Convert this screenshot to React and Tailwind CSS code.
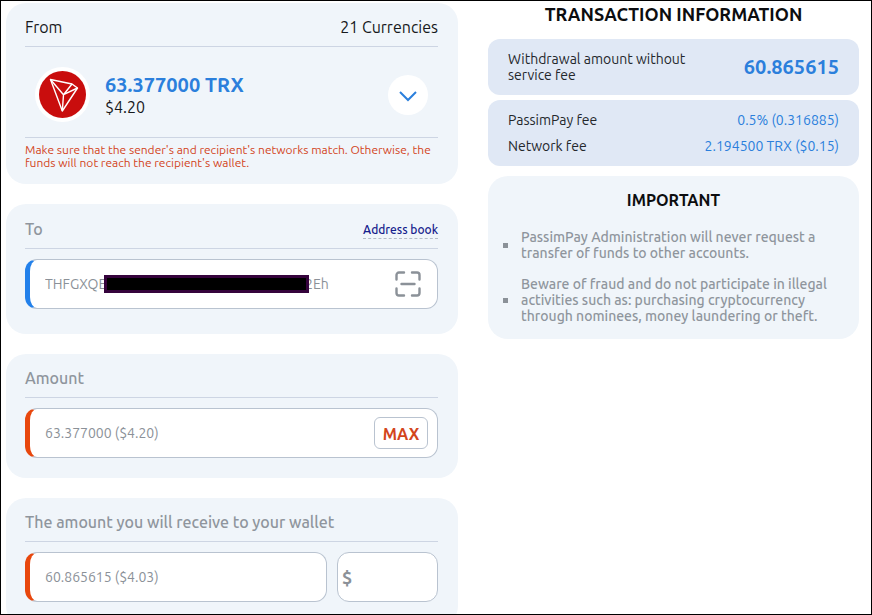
import { useState } from "react";

const NOTES = [
  "PassimPay Administration will never request a transfer of funds to other accounts.",
  "Beware of fraud and do not participate in illegal activities such as: purchasing cryptocurrency through nominees, money laundering or theft.",
];

function Card({ title, aside, htmlFor, className, children }) {
  return (
    <section className={`rounded-[20px] bg-[#f0f5fa] pr-5 pl-[19px] ${className}`}>
      <div className="flex items-center justify-between border-b border-[#cdd5e3] pt-3.5 pb-[9px] text-base leading-5">
        {htmlFor ? (
          <label htmlFor={htmlFor} className="font-medium text-[#8f959d]">
            {title}
          </label>
        ) : (
          <h2 className="text-[#17191c]">{title}</h2>
        )}
        {aside}
      </div>
      {children}
    </section>
  );
}

function TronLogo() {
  return (
    <span className="flex size-[55px] shrink-0 items-center justify-center rounded-full bg-white">
      <svg viewBox="0 0 47 47" className="size-[47px]" aria-hidden="true">
        <circle cx="23.5" cy="23.5" r="23.5" fill="#c90d0d" />
        <g fill="none" stroke="#fff" strokeWidth="1.4" strokeLinejoin="round">
          <path d="M11.5 8.5 33 13 38.5 17 23.3 40Z" />
          <path d="M11.5 8.5 24.5 23.7 23.3 40M24.5 23.7 38.5 17M24.5 23.7 33 13" />
        </g>
      </svg>
    </span>
  );
}

function ScanIcon() {
  return (
    <svg
      viewBox="0 0 26 26"
      className="size-[26px]"
      fill="none"
      stroke="#8b9198"
      strokeWidth="2.4"
      strokeLinecap="round"
      aria-hidden="true"
    >
      <path d="M1.5 8.5V4a2.5 2.5 0 0 1 2.5-2.5h5M17 1.5h5A2.5 2.5 0 0 1 24.5 4v4.5M24.5 17.5V22a2.5 2.5 0 0 1-2.5 2.5h-5M9 24.5H4A2.5 2.5 0 0 1 1.5 22v-4.5M6.5 13h13" />
    </svg>
  );
}

export default function App() {
  const [address, setAddress] = useState("THFGXQE");
  const [amount, setAmount] = useState("63.377000 ($4.20)");
  const [receive, setReceive] = useState("60.865615 ($4.03)");
  const [usd, setUsd] = useState("");

  return (
    <div className="h-screen overflow-hidden border border-black bg-white pt-0.5 pr-3 pl-[5px] font-['Ubuntu','Noto_Sans',sans-serif]">
      <div className="grid grid-cols-[452fr_371fr] items-start gap-[30px]">
        <main className="flex min-w-0 flex-col gap-5">
          <Card title="From" className="pb-[15px]" aside={<span className="text-[#17191c]">21 Currencies</span>}>
            <div className="flex items-center border-b border-[#cdd5e3] px-2.5 pt-5 pb-[15px]">
              <TronLogo />
              <div className="ml-[15px] flex-1 pt-[3px]">
                <p className="text-xl leading-[22px] font-semibold text-[#2b7fdc]">63.377000 TRX</p>
                <p className="text-base leading-[22px] text-[#17191c]">$4.20</p>
              </div>
              <button
                type="button"
                aria-label="Choose currency"
                className="flex size-10 items-center justify-center rounded-full bg-white"
              >
                <svg viewBox="0 0 18 11" className="mt-1 h-[11px] w-[18px]" fill="none" stroke="#2b7fdc" strokeWidth="2">
                  <path d="m1 1 8 8 8-8" />
                </svg>
              </button>
            </div>
            <p className="pt-[5px] text-xs leading-[13px] text-[#d3451c]">
              Make sure that the sender's and recipient's networks match. Otherwise, the funds will not reach the
              recipient's wallet.
            </p>
          </Card>

          <Card
            title="To"
            htmlFor="address"
            className="pb-[25px]"
            aside={
              <a
                href="#book"
                className="border-b border-dashed border-[#b4bcc8] pt-1 text-xs leading-4 font-medium text-[#14208c]"
              >
                Address book
              </a>
            }
          >
            <div className="mt-2.5 flex h-[50px] items-center rounded-xl border border-l-[5px] border-[#b9c3d0] border-l-[#2280ea] bg-white pr-4 pl-[15px] text-sm text-[#8b9198]">
              <input
                id="address"
                value={address}
                onChange={(e) => setAddress(e.target.value)}
                className="w-[63px] min-w-0 outline-none"
              />
              <span className="z-10 -ml-1 h-[18px] w-[205px] border-[3px] border-[#35033c] bg-black" />
              <span className="-ml-1">2Eh</span>
              <button type="button" aria-label="Scan QR code" className="ml-auto">
                <ScanIcon />
              </button>
            </div>
          </Card>

          <Card title="Amount" htmlFor="amount" className="pb-5">
            <div className="mt-2.5 flex h-[50px] items-center rounded-xl border border-l-[5px] border-[#b9c3d0] border-l-[#e8470d] bg-white pr-[9px] pl-[15px]">
              <input
                id="amount"
                value={amount}
                onChange={(e) => setAmount(e.target.value)}
                className="min-w-0 flex-1 text-sm text-[#8b9198] outline-none"
              />
              <button
                type="button"
                className="h-8 w-[54px] rounded-md border border-[#b9c3d0] pt-0.5 text-base leading-5 font-semibold text-[#d3451c]"
              >
                MAX
              </button>
            </div>
          </Card>

          <Card title="The amount you will receive to your wallet" htmlFor="receive" className="pb-6">
            <div className="mt-2.5 flex gap-2.5">
              <div className="flex h-[50px] min-w-0 flex-1 items-center rounded-xl border border-l-[5px] border-[#b9c3d0] border-l-[#e8470d] bg-white pr-4 pl-[15px]">
                <input
                  id="receive"
                  value={receive}
                  onChange={(e) => setReceive(e.target.value)}
                  className="w-full min-w-0 text-sm text-[#8b9198] outline-none"
                />
              </div>
              <div className="flex h-[50px] w-[101px] items-center rounded-xl border border-[#b9c3d0] bg-white px-1">
                <label htmlFor="usd" className="text-lg font-bold text-[#8b9198]">
                  $
                </label>
                <input
                  id="usd"
                  value={usd}
                  onChange={(e) => setUsd(e.target.value)}
                  className="w-full min-w-0 pl-1 text-sm text-[#8b9198] outline-none"
                />
              </div>
            </div>
          </Card>
        </main>

        <aside className="min-w-0">
          <h2 className="text-center text-lg leading-[22px] font-semibold text-[#0c0d0f]">TRANSACTION INFORMATION</h2>
          <dl className="mt-3.5 flex h-14 items-center justify-between rounded-xl bg-[#e0e8f5] px-5">
            <dt className="w-[200px] text-sm leading-4 text-[#24272c]">Withdrawal amount without service fee</dt>
            <dd className="text-xl font-semibold text-[#2b7fdc]">60.865615</dd>
          </dl>
          <dl className="mt-[5px] flex flex-col gap-1.5 rounded-xl bg-[#e0e8f5] px-5 py-2.5 text-sm leading-5">
            <div className="flex justify-between">
              <dt className="text-[#24272c]">PassimPay fee</dt>
              <dd className="text-[#2b7fdc]">0.5% (0.316885)</dd>
            </div>
            <div className="flex justify-between">
              <dt className="text-[#24272c]">Network fee</dt>
              <dd className="text-[#2b7fdc]">2.194500 TRX ($0.15)</dd>
            </div>
          </dl>

          <section className="mt-2.5 rounded-[20px] bg-[#f0f5fa] px-[15px] pt-3.5 pb-[15px]">
            <h3 className="text-center text-base leading-5 font-semibold text-[#0c0d0f]">IMPORTANT</h3>
            <ul className="mt-[19px] flex flex-col gap-[15px]">
              {NOTES.map((note) => (
                <li key={note} className="flex items-center gap-[13px] text-sm leading-4 font-medium text-[#8f959d]">
                  <span className="size-[5px] shrink-0 bg-[#8b9198]" />
                  {note}
                </li>
              ))}
            </ul>
          </section>
        </aside>
      </div>
    </div>
  );
}
